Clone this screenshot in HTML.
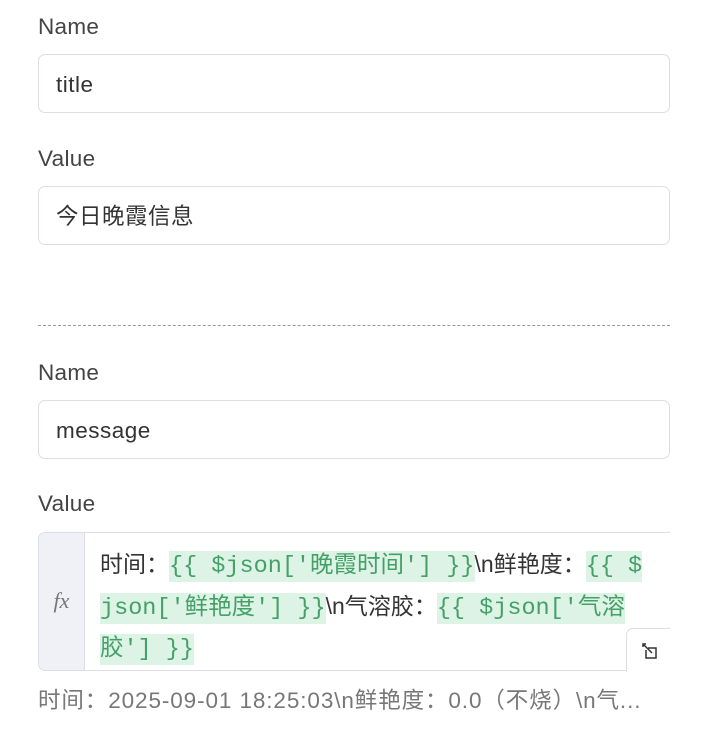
<!DOCTYPE html>
<html><head><meta charset="utf-8"><style>
body{margin:0;background:#fff;font-family:"Liberation Sans","Noto Sans CJK SC",sans-serif;color:#333;width:706px;height:743px;overflow:hidden;position:relative}
.lbl{position:absolute;left:38px;font-size:22.5px;letter-spacing:0.3px;color:#444}
.inp{position:absolute;left:38px;border:1.5px solid #dcdde6;border-radius:7px;font-size:22.5px;letter-spacing:0.5px;line-height:60px;padding-left:17px;box-sizing:border-box;width:632px;height:59px;color:#333}
.dash{position:absolute;left:38px;top:325px;width:632px;border-top:1.5px dashed #999}
.fx{position:absolute;left:38px;top:532px;width:632px;height:139px;border:1.5px solid #dcdde6;border-right:none;border-radius:7px 0 0 7px;box-sizing:border-box;overflow:hidden}
.gut{position:absolute;left:0;top:0;width:45px;height:100%;background:#f0f1f6;border-right:1.5px solid #dcdde6;font-family:"Liberation Serif",serif;font-style:italic;color:#777;font-size:22px;text-align:center;line-height:136px}
.code{position:absolute;left:61px;top:12px;width:570px;font-size:23px;line-height:38.5px;color:#333;white-space:nowrap}
.g{font-family:"Liberation Mono","Noto Sans CJK SC",monospace;color:#45a068;background:#dcf3e6;font-size:23.5px;padding:2px 0}
.btn{position:absolute;left:626px;top:628px;width:44px;height:44px;border:1.5px solid #dcdde6;border-right:none;border-bottom:none;border-radius:7px 0 0 0;background:#fff;box-sizing:border-box}
.hint{position:absolute;left:38px;top:683px;font-size:22.5px;letter-spacing:0.9px;color:#777;white-space:nowrap}
</style></head><body>
<div class="lbl" style="top:14px">Name</div>
<div class="inp" style="top:54px">title</div>
<div class="lbl" style="top:146px">Value</div>
<div class="inp" style="top:186px">今日晚霞信息</div>
<div class="dash"></div>
<div class="lbl" style="top:360px">Name</div>
<div class="inp" style="top:400px">message</div>
<div class="lbl" style="top:491px">Value</div>
<div class="fx"><div class="gut">fx</div>
<div class="code">时间：<span class="g">{{ $json['晚霞时间'] }}</span>\n鲜艳度：<span class="g">{{ $</span><br><span class="g">json['鲜艳度'] }}</span>\n气溶胶：<span class="g">{{ $json['气溶</span><br><span class="g">胶'] }}</span></div></div>
<div class="btn"><svg width="44" height="44" viewBox="0 0 44 44"><g fill="none" stroke="#333" stroke-width="1.5"><path d="M16 18v-3h3M16 15l9 9"/><path d="M19 21v8h10v-10h-8"/></g></svg></div>
<div class="hint">时间：2025-09-01 18:25:03\n鲜艳度：0.0（不烧）\n气...</div>
</body></html>
